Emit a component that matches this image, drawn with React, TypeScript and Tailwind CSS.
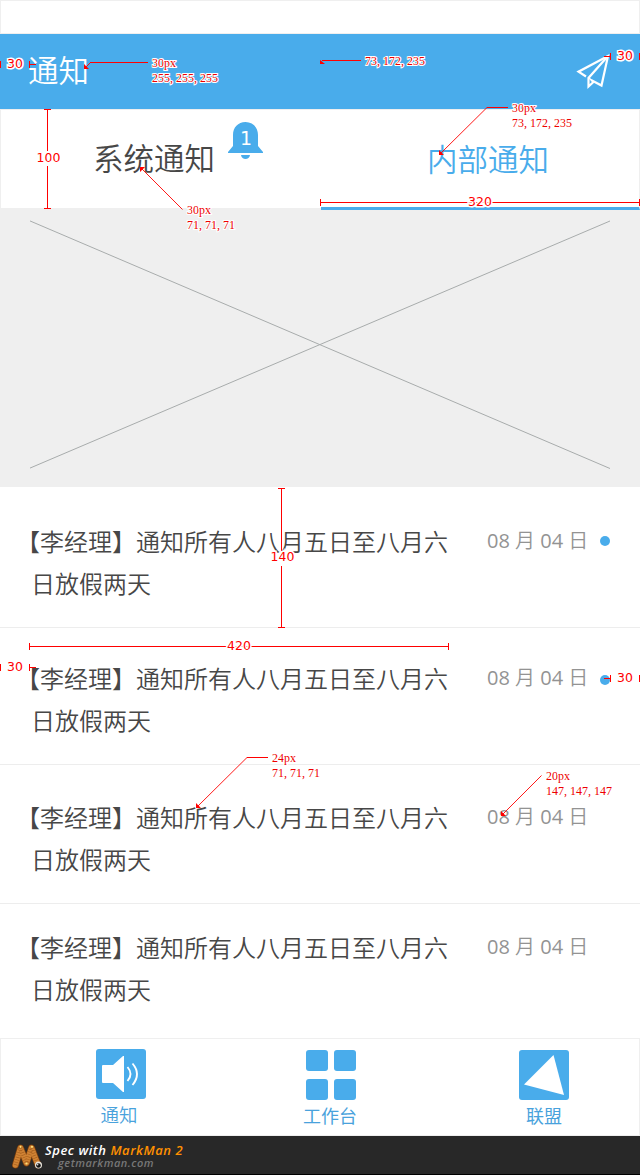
import React from "react";

const CJK = "font-['Noto_Sans_CJK_SC',sans-serif]";

function Plane() {
  return (
    <svg width="36" height="36" viewBox="0 0 36 36" fill="none" stroke="#fff" strokeWidth="2.2" strokeLinejoin="miter">
      <path d="M11 22.500 L3.500 17.700 L33 2 L26.500 31.500 L16 26" />
      <path d="M33 2 L13.500 24 V32.500 L19 27.500" />
      <path d="M14 24L18 27.500" strokeWidth="1.500" />
    </svg>
  );
}

function Bell() {
  return (
    <div className="relative h-[38px] w-[35px]">
      <svg width="35" height="38" viewBox="0 0 35 38" fill="#49aceb">
        <path d="M17.5 0 C25 0 30 5.5 30 13 V24 L35 30 V31 H0 V30 L5 24 V13 C5 5.5 10 0 17.5 0 Z" />
        <path d="M13 33 H22 C21.5 38.3 13.5 38.3 13 33 Z" />
      </svg>
      <span className="absolute left-0 top-[4px] w-full pl-px text-center font-['DejaVu_Sans',sans-serif] text-[19px] leading-[24px] text-white">1</span>
    </div>
  );
}

const rows = [
  { box: "h-[141px] pt-[33px]", dot: "mt-[16px]", unread: true },
  { box: "h-[137px] pt-[29px]", dot: "mt-[18px]", unread: true },
  { box: "h-[139px] pt-[31px]", dot: "mt-[16px]", unread: false },
  { box: "h-[134px] pt-[22px] border-b-0", dot: "mt-[16px]", unread: false },
];

function Row({ box, dot, unread }: { box: string; dot: string; unread: boolean }) {
  return (
    <li className={`flex items-start border-b border-[#ededed] bg-white ${box}`}>
      <div className="ml-4 w-[436px] text-[24px] font-[350] leading-[42px] text-[#474747]">
        <p className="whitespace-nowrap">【李经理】通知所有人八月五日至八月六</p>
        <p className="whitespace-nowrap pl-[15px]">日放假两天</p>
      </div>
      <time className="ml-[35px] mt-[6px] w-[113px] whitespace-nowrap font-['Open_Sans','Noto_Sans_CJK_SC',sans-serif] text-[20px] font-[350] leading-[30px] text-[#939393]">
        <span className="font-normal">08</span> 月 <span className="font-normal">04</span> 日
      </time>
      {unread && <span className={`h-[10px] w-[10px] rounded-full bg-[#49aceb] ${dot}`} />}
    </li>
  );
}

function Measure({ x, y, text }: { x: number; y: number; text: string }) {
  return (
    <text x={x} y={y} textLength={text.length * 8} fontSize="12.5" className="font-['DejaVu_Sans',sans-serif]" stroke="#fff" strokeWidth="3" paintOrder="stroke" fill="#f00">
      {text}
    </text>
  );
}

function Note({ x, y, lines }: { x: number; y: number; lines: string[] }) {
  return (
    <>
      {lines.map((line, i) => (
        <text
          key={line}
          x={Array.from(line, (_, n) => x + n * 6).join(" ")}
          y={y + i * 15}
          fontSize="12"
          className="font-['Liberation_Serif',serif]"
          stroke="#fff"
          strokeWidth="2"
          paintOrder="stroke"
          fill="#e00"
        >
          {line}
        </text>
      ))}
    </>
  );
}

function Annotations() {
  return (
    <svg className="pointer-events-none absolute left-0 top-0" width="640" height="1175" viewBox="0 0 640 1175" fill="none">
      <g stroke="#f00" strokeWidth="1" shapeRendering="crispEdges">
        <path d="M0.5 61V68 M29.5 61V68 M29 64.5H36" />
        <path d="M604 56.5H610 M610.5 53V60 M639.5 53V60" />
        <path d="M44 109.5H51 M47.5 109V208 M44 208.5H51" />
        <path d="M320.5 199V206 M320 202.5H640 M639.5 199V206" />
        <path d="M278 488.5H285 M281.5 488V628 M278 627.5H285" />
        <path d="M29.5 643V650 M29 646.5H449 M448.5 643V650" />
        <path d="M0.5 664V671 M29.5 664V671 M29 667.5H36" />
        <path d="M604 678.5H610 M610.5 675V682 M639.5 675V682" />
        <path d="M90 62.5H148 M322 60.5H361 M487 107.5H508 M247 757.5H268" />
      </g>
      <path
        d="M86 67L91 62 M441 153L487 107.5 M141 168L182.500 209.5 M198 806L247 757.5 M503 814L541.500 775.500"
        stroke="#f00"
        strokeWidth="0.9"
      />
      <path
        d="M84 64V69H89Z M320 60V64H325Z M439 150V155H444Z M140 172V167H145Z M196 803V808H201Z M501 811V816H506Z"
        fill="#f00"
      />
      <rect x="36" y="151" width="25" height="15" fill="#fff" />
      <Measure x={7} y={68} text="30" />
      <Measure x={617} y={60} text="30" />
      <Measure x={36.500} y={162} text="100" />
      <Measure x={468} y={206} text="320" />
      <path d="M281.500 551V566" stroke="#fff" strokeWidth="2" />
      <Measure x={270.500} y={561} text="140" />
      <Measure x={227} y={650} text="420" />
      <Measure x={7} y={671} text="30" />
      <Measure x={617} y={682} text="30" />
      <Note x={152} y={67} lines={["30px", "255,255,255"]} />
      <Note x={365} y={65} lines={["73,172,235"]} />
      <Note x={512} y={112} lines={["30px", "73,172,235"]} />
      <Note x={187} y={214} lines={["30px", "71,71,71"]} />
      <Note x={272} y={762} lines={["24px", "71,71,71"]} />
      <Note x={546} y={780} lines={["20px", "147,147,147"]} />
    </svg>
  );
}

function Caterpillar() {
  return (
    <svg width="32" height="28" viewBox="0 0 32 28" fill="none" strokeLinecap="round" strokeLinejoin="round">
      <path d="M3.500 22 L8.500 5 L14.500 20 L19.500 5 L26 22" stroke="#7a3f0e" strokeWidth="7" />
      <path d="M3.500 22 L8.500 5 L14.500 20 L19.500 5 L26 22" stroke="#d08334" strokeWidth="5.500" />
      <path d="M3.500 22 L8.500 5 L14.500 20 L19.500 5 L26 22" stroke="#a45d1c" strokeWidth="4.500" strokeDasharray="0.600 1.900" strokeLinecap="butt" />
      <circle cx="8.500" cy="3.800" r="1.100" fill="#ffe07a" />
      <circle cx="20" cy="3.800" r="1.100" fill="#ffe07a" />
      <circle cx="14.500" cy="20.500" r="1.100" fill="#ffe07a" />
      <circle cx="26.500" cy="22" r="3.500" fill="#e8e4dc" />
      <circle cx="26.500" cy="22.500" r="2.300" fill="#151515" />
      <circle cx="25.700" cy="21.700" r="0.700" fill="#fff" />
    </svg>
  );
}

export default function App() {
  return (
    <div className={`relative h-[1175px] w-[640px] overflow-hidden bg-white ${CJK}`}>
      <div className="h-[34px] border border-[#efefef]" />
      <header className="flex h-[75px] items-center justify-between bg-[#49aceb] pl-[28px] pr-[29px]">
        <h1 className="-mt-[5px] text-[30.5px] font-[350] leading-[40px] text-white">通知</h1>
        <Plane />
      </header>
      <nav className="flex h-[101px] bg-[#efefef]">
        <div className="flex h-[99px] w-[321px] items-start border-l border-t border-[#efefef] bg-white pl-[92px]">
          <span className="mt-[27px] w-[121px] whitespace-nowrap text-[30.5px] font-[350] leading-[40px] text-[#474747]">系统通知</span>
          <div className="ml-[14px] mt-[12px]"><Bell /></div>
        </div>
        <div className="h-[101px] w-[319px] border-b-[3px] border-r border-t border-[#efefef] border-b-[#49aceb] bg-white pl-[106px] pt-[28px]">
          <span className="text-[30.5px] font-[350] leading-[40px] text-[#49aceb]">内部通知</span>
        </div>
      </nav>
      <div className="h-[277px] bg-[#efefef] px-[30px] pt-[10px]">
        <svg width="580" height="250" viewBox="0 0 580 250" stroke="#a8acac" strokeWidth="1">
          <path d="M-1 0.500L580 248.500M-1 248.500L580 1" />
        </svg>
      </div>
      <ul>{rows.map((row, i) => <Row key={i} {...row} />)}</ul>
      <footer className="flex h-[98px] border border-[#efefef] text-[18px] leading-[26px] text-[#49a2dc]">
        <div className="flex w-[240px] flex-col items-center pt-[10px] font-[350]">
          <svg width="50" height="50" viewBox="0 0 50 50">
            <rect width="50" height="50" rx="3" fill="#49aceb" />
            <path d="M7 16H17L27 7H28V43H27L17 34H7Q6 34 6 33V17Q6 16 7 16Z" fill="#fff" />
            <path d="M31.500 18Q37.500 25 31.500 32M36.500 14.500Q45.500 25 36.500 36" fill="none" stroke="#fff" strokeWidth="1.900" />
          </svg>
          <span className="-ml-[4px] mt-[2px] text-[18.5px]">通知</span>
        </div>
        <div className="flex w-[180px] flex-col items-center pt-[11px]">
          <div className="grid grid-cols-2 gap-x-[6px] gap-y-[8px]">
            <i className="h-[21px] w-[22px] rounded-[3px] bg-[#49aceb]" />
            <i className="h-[21px] w-[22px] rounded-[3px] bg-[#49aceb]" />
            <i className="h-[21px] w-[22px] rounded-[3px] bg-[#49aceb]" />
            <i className="h-[21px] w-[22px] rounded-[3px] bg-[#49aceb]" />
          </div>
          <span className="-ml-[2px] mt-[2px]">工作台</span>
        </div>
        <div className="ml-[31px] flex w-[184px] flex-col items-center pt-[11px]">
          <svg width="50" height="50" viewBox="0 0 50 50">
            <rect width="50" height="50" rx="3" fill="#49aceb" />
            <path d="M34.500 5L45 45L5 34.500Z" fill="#fff" />
          </svg>
          <span className="mt-[2px]">联盟</span>
        </div>
      </footer>
      <div className="flex h-[39px] items-start border-b border-black bg-[#282828] pl-[12px] pt-[7px]">
        <Caterpillar />
        <div className="ml-px whitespace-nowrap font-['Open_Sans',sans-serif] font-semibold italic">
          <p className="text-[13px] leading-[14px] tracking-[0.55px] text-white">
            Spec with <span className="text-[#ff9000]">MarkMan 2</span>
          </p>
          <p className="pl-[13px] text-[11px] leading-[11px] tracking-[0.5px] text-[#777]">getmarkman.com</p>
        </div>
      </div>
      <Annotations />
    </div>
  );
}
